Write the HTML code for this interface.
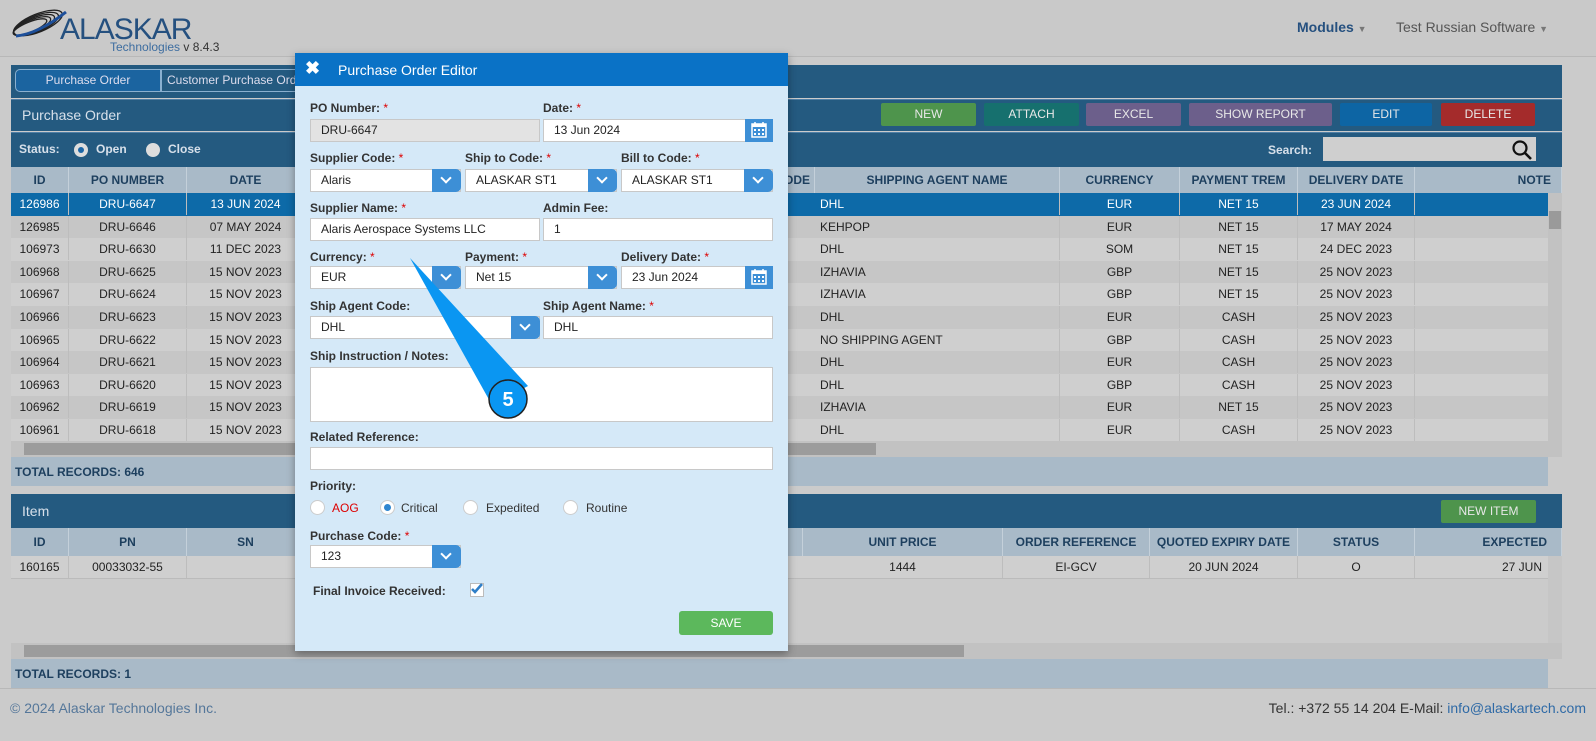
<!DOCTYPE html>
<html><head><meta charset="utf-8"><style>
*{box-sizing:border-box;margin:0;padding:0}
body{width:1596px;height:741px;overflow:hidden;background:#cbcbcb;font-family:"Liberation Sans",sans-serif;position:relative;font-size:12px;color:#222}
.a{position:absolute}
.hdr{left:0;top:0;width:1596px;height:57px;background:#c9c9c9;border-bottom:1px solid #b8b8b8}
.band{background:#245a80}
.th{position:absolute;background:#a9bac8;color:#1d3f5e;font-weight:bold;font-size:12px;text-align:center;line-height:26px;border-right:1px solid #c4d0da}
.td{position:absolute;font-size:12px;text-align:center;line-height:22px;color:#222;border-right:1px solid #bdbdbd}
.btn{position:absolute;top:103px;height:23px;line-height:23px;color:#e8e8e8;text-align:center;font-size:12px;border-radius:2px}
.m{left:295px;top:53px;width:493px;height:598px;background:#d5e9f8;box-shadow:0 3px 8px rgba(0,0,0,.35)}
.lb{position:absolute;font-size:12px;font-weight:bold;color:#333}
.lb i{color:#d00;font-style:normal;font-weight:normal}
.in{position:absolute;height:23px;background:#fff;border:1px solid #c8c8c8;font-size:12px;line-height:21px;padding-left:10px;color:#222}
.dd{position:absolute;top:-1px;right:-1px;width:29px;height:23px;background:#3d8fd6;border-radius:0 5px 5px 0}
.dd:after{content:"";position:absolute;left:10px;top:5px;width:6px;height:6px;border-right:2px solid #fff;border-bottom:2px solid #fff;transform:rotate(45deg)}
.cal{position:absolute;top:-1px;right:-1px;width:28px;height:23px;background:#3d8fd6}
.rad{position:absolute;width:15px;height:15px;border-radius:50%;background:#fff;border:1px solid #ccc}
</style></head><body>
<div class="a hdr"></div>
<svg class="a" style="left:8px;top:6px" width="62" height="36" viewBox="0 0 62 36"><g fill="none" stroke="#222" stroke-width="1.3"><ellipse cx="30" cy="17" rx="26" ry="9" transform="rotate(-22 30 17)"/><ellipse cx="28" cy="18" rx="24" ry="8" transform="rotate(-22 28 18)"/><ellipse cx="26" cy="19" rx="22" ry="7" transform="rotate(-22 26 19)"/><ellipse cx="24" cy="20" rx="20" ry="6" transform="rotate(-22 24 20)"/><ellipse cx="22" cy="21" rx="18" ry="5" transform="rotate(-22 22 21)"/></g><path d="M8 30 Q30 28 58 6" stroke="#1d4f9a" stroke-width="3" fill="none"/></svg>
<div class="a" style="left:60px;top:13px;font-size:30px;color:#25507f;letter-spacing:-1px">ALASKAR</div>
<div class="a" style="left:110px;top:40px;font-size:12px;color:#3d6da0">Technologies <span style="color:#333">v 8.4.3</span></div>
<div class="a" style="left:1297px;top:19px;font-size:14px;font-weight:bold;color:#25507f">Modules <span style="font-size:9px;color:#777">▼</span></div>
<div class="a" style="left:1396px;top:19px;font-size:14px;color:#555">Test Russian Software <span style="font-size:9px;color:#777">▼</span></div>

<div class="a band" style="left:11px;top:65px;width:1551px;height:33px"></div>
<div class="a" style="left:15px;top:69px;width:146px;height:23px;background:#1b64a0;border:1px solid #8ab0d0;border-radius:5px 0 0 5px;color:#dde;text-align:center;line-height:21px">Purchase Order</div>
<div class="a" style="left:161px;top:69px;width:140px;height:23px;border:1px solid #8ab0d0;color:#dde;line-height:21px;padding-left:5px;white-space:nowrap;overflow:hidden">Customer Purchase Order</div>
<div class="a band" style="left:11px;top:99px;width:1551px;height:32px;border-top:1px solid #4f7fa6"></div>
<div class="a" style="left:22px;top:107px;font-size:14px;color:#d7e0ea">Purchase Order</div>
<div class="btn" style="left:881px;width:95px;background:#4e944c">NEW</div>
<div class="btn" style="left:984px;width:95px;background:#16706e">ATTACH</div>
<div class="btn" style="left:1086px;width:95px;background:#6c5f8b">EXCEL</div>
<div class="btn" style="left:1189px;width:143px;background:#6c5f8b">SHOW REPORT</div>
<div class="btn" style="left:1340px;width:92px;background:#0d65a4">EDIT</div>
<div class="btn" style="left:1441px;width:94px;background:#a42b2b">DELETE</div>
<div class="a band" style="left:11px;top:132px;width:1551px;height:35px;border-top:1px solid #4f7fa6"></div>
<div class="a" style="left:19px;top:142px;font-weight:bold;color:#d7e0ea">Status:</div>
<div class="a" style="left:74px;top:143px;width:14px;height:14px;border-radius:50%;background:#ddd"><div style="margin:4px;width:6px;height:6px;border-radius:50%;background:#1c66a6"></div></div>
<div class="a" style="left:96px;top:142px;font-weight:bold;color:#d7e0ea">Open</div>
<div class="a" style="left:146px;top:143px;width:14px;height:14px;border-radius:50%;background:#ddd"></div>
<div class="a" style="left:168px;top:142px;font-weight:bold;color:#d7e0ea">Close</div>
<div class="a" style="left:1268px;top:143px;font-weight:bold;color:#d7e0ea">Search:</div>
<div class="a" style="left:1323px;top:137px;width:213px;height:24px;background:#cfcfcf"></div>
<svg class="a" style="left:1511px;top:139px" width="22" height="22" viewBox="0 0 22 22"><circle cx="9" cy="9" r="6.5" fill="none" stroke="#111" stroke-width="2.2"/><path d="M14 14L20 20" stroke="#111" stroke-width="2.6"/></svg>

<div class="th" style="left:11px;top:167px;width:58px">ID</div>
<div class="th" style="left:69px;top:167px;width:118px">PO NUMBER</div>
<div class="th" style="left:187px;top:167px;width:118px">DATE</div>
<div class="th" style="left:305px;top:167px;width:510px;text-align:right;padding-right:4px">ODE</div>
<div class="th" style="left:815px;top:167px;width:245px">SHIPPING AGENT NAME</div>
<div class="th" style="left:1060px;top:167px;width:120px">CURRENCY</div>
<div class="th" style="left:1180px;top:167px;width:118px">PAYMENT TREM</div>
<div class="th" style="left:1298px;top:167px;width:117px">DELIVERY DATE</div>
<div class="th" style="left:1415px;top:167px;width:147px;text-align:right;padding-right:10px;overflow:hidden">NOTE</div>
<div id="rows"></div>
<div class="a" style="left:1548px;top:193px;width:14px;height:248px;background:#c2c2c2"></div>
<div class="a" style="left:1549px;top:211px;width:12px;height:18px;background:#9a9a9a"></div>
<div class="a" style="left:11px;top:441px;width:1551px;height:16px;background:#c2c2c2"></div>
<div class="a" style="left:24px;top:443px;width:852px;height:12px;background:#9c9c9c"></div>
<div class="a" style="left:11px;top:457px;width:1537px;height:29px;background:#a9bac8"></div>
<div class="a" style="left:15px;top:465px;font-weight:bold;color:#1d3f5e">TOTAL RECORDS: 646</div>

<div class="a band" style="left:11px;top:494px;width:1551px;height:34px"></div>
<div class="a" style="left:22px;top:503px;font-size:14px;color:#d7e0ea">Item</div>
<div class="btn" style="left:1441px;top:500px;width:95px;background:#4e944c">NEW ITEM</div>
<div class="th" style="left:11px;top:528px;width:58px;height:28px;line-height:28px">ID</div>
<div class="th" style="left:69px;top:528px;width:118px;height:28px;line-height:28px">PN</div>
<div class="th" style="left:187px;top:528px;width:118px;height:28px;line-height:28px">SN</div>
<div class="th" style="left:305px;top:528px;width:498px;height:28px"></div>
<div class="th" style="left:803px;top:528px;width:200px;height:28px;line-height:28px">UNIT PRICE</div>
<div class="th" style="left:1003px;top:528px;width:147px;height:28px;line-height:28px">ORDER REFERENCE</div>
<div class="th" style="left:1150px;top:528px;width:148px;height:28px;line-height:28px">QUOTED EXPIRY DATE</div>
<div class="th" style="left:1298px;top:528px;width:117px;height:28px;line-height:28px">STATUS</div>
<div class="th" style="left:1415px;top:528px;width:147px;height:28px;line-height:28px;text-align:right;padding-right:14px">EXPECTED</div>
<div class="a" style="left:11px;top:556px;width:1537px;height:23px;background:#cfcfcf;border-bottom:1px solid #bbb"></div>
<div class="td" style="left:11px;top:556px;width:58px">160165</div>
<div class="td" style="left:69px;top:556px;width:118px">00033032-55</div>
<div class="td" style="left:187px;top:556px;width:118px">&nbsp;</div>
<div class="td" style="left:803px;top:556px;width:200px">1444</div>
<div class="td" style="left:1003px;top:556px;width:147px">EI-GCV</div>
<div class="td" style="left:1150px;top:556px;width:148px">20 JUN 2024</div>
<div class="td" style="left:1298px;top:556px;width:117px">O</div>
<div class="td" style="left:1415px;top:556px;width:133px;text-align:right;padding-right:6px;border:0">27 JUN</div>
<div class="a" style="left:1548px;top:556px;width:14px;height:87px;background:#c6c6c6"></div>
<div class="a" style="left:11px;top:643px;width:1551px;height:16px;background:#c2c2c2"></div>
<div class="a" style="left:24px;top:645px;width:940px;height:12px;background:#9c9c9c"></div>
<div class="a" style="left:11px;top:659px;width:1537px;height:29px;background:#a9bac8"></div>
<div class="a" style="left:15px;top:667px;font-weight:bold;color:#1d3f5e">TOTAL RECORDS: 1</div>
<div class="a" style="left:0;top:688px;width:1596px;height:1px;background:#b8b8b8"></div>
<div class="a" style="left:10px;top:700px;font-size:14px;color:#55779a">© 2024 Alaskar Technologies Inc.</div>
<div class="a" style="right:10px;top:700px;font-size:14px;color:#333">Tel.: +372 55 14 204 E-Mail: <span style="color:#2f6aa6">info@alaskartech.com</span></div>

<div class="a m">
 <div class="a" style="left:0;top:0;width:493px;height:33px;background:#0a72c6"></div>
 <div class="a" style="left:10px;top:5px;color:#fff;font-size:18px;font-weight:bold">✖</div>
 <div class="a" style="left:43px;top:9px;color:#fff;font-size:14px">Purchase Order Editor</div>

 <div class="lb" style="left:15px;top:48px">PO Number: <i>*</i></div>
 <div class="in" style="left:15px;top:66px;width:230px;background:#e3e3e3">DRU-6647</div>
 <div class="lb" style="left:248px;top:48px">Date: <i>*</i></div>
 <div class="in" style="left:248px;top:66px;width:230px">13 Jun 2024<div class="cal"><svg width="28" height="23" viewBox="0 0 28 23"><rect x="7" y="5" width="14" height="13" fill="none" stroke="#fff" stroke-width="1.5"/><rect x="7" y="5" width="14" height="3" fill="#fff"/><path d="M10 3v4M18 3v4" stroke="#fff" stroke-width="1.5"/><g fill="#fff"><rect x="9" y="10" width="2" height="2"/><rect x="13" y="10" width="2" height="2"/><rect x="17" y="10" width="2" height="2"/><rect x="9" y="14" width="2" height="2"/><rect x="13" y="14" width="2" height="2"/><rect x="17" y="14" width="2" height="2"/></g></svg></div></div>

 <div class="lb" style="left:15px;top:98px">Supplier Code: <i>*</i></div>
 <div class="in" style="left:15px;top:116px;width:151px">Alaris<div class="dd"></div></div>
 <div class="lb" style="left:170px;top:98px">Ship to Code: <i>*</i></div>
 <div class="in" style="left:170px;top:116px;width:152px">ALASKAR ST1<div class="dd"></div></div>
 <div class="lb" style="left:326px;top:98px">Bill to Code: <i>*</i></div>
 <div class="in" style="left:326px;top:116px;width:152px">ALASKAR ST1<div class="dd"></div></div>

 <div class="lb" style="left:15px;top:148px">Supplier Name: <i>*</i></div>
 <div class="in" style="left:15px;top:165px;width:230px">Alaris Aerospace Systems LLC</div>
 <div class="lb" style="left:248px;top:148px">Admin Fee:</div>
 <div class="in" style="left:248px;top:165px;width:230px">1</div>

 <div class="lb" style="left:15px;top:197px">Currency: <i>*</i></div>
 <div class="in" style="left:15px;top:213px;width:151px">EUR<div class="dd"></div></div>
 <div class="lb" style="left:170px;top:197px">Payment: <i>*</i></div>
 <div class="in" style="left:170px;top:213px;width:152px">Net 15<div class="dd"></div></div>
 <div class="lb" style="left:326px;top:197px">Delivery Date: <i>*</i></div>
 <div class="in" style="left:326px;top:213px;width:152px">23 Jun 2024<div class="cal"><svg width="28" height="23" viewBox="0 0 28 23"><rect x="7" y="5" width="14" height="13" fill="none" stroke="#fff" stroke-width="1.5"/><rect x="7" y="5" width="14" height="3" fill="#fff"/><path d="M10 3v4M18 3v4" stroke="#fff" stroke-width="1.5"/><g fill="#fff"><rect x="9" y="10" width="2" height="2"/><rect x="13" y="10" width="2" height="2"/><rect x="17" y="10" width="2" height="2"/><rect x="9" y="14" width="2" height="2"/><rect x="13" y="14" width="2" height="2"/><rect x="17" y="14" width="2" height="2"/></g></svg></div></div>

 <div class="lb" style="left:15px;top:246px">Ship Agent Code:</div>
 <div class="in" style="left:15px;top:263px;width:230px">DHL<div class="dd"></div></div>
 <div class="lb" style="left:248px;top:246px">Ship Agent Name: <i>*</i></div>
 <div class="in" style="left:248px;top:263px;width:230px">DHL</div>

 <div class="lb" style="left:15px;top:296px">Ship Instruction / Notes:</div>
 <div class="in" style="left:15px;top:314px;width:463px;height:55px"></div>

 <div class="lb" style="left:15px;top:377px">Related Reference:</div>
 <div class="in" style="left:15px;top:394px;width:463px"></div>

 <div class="lb" style="left:15px;top:426px">Priority:</div>
 <div class="rad" style="left:15px;top:447px"></div><div class="lb" style="left:37px;top:448px;color:#d00;font-weight:normal">AOG</div>
 <div class="rad" style="left:85px;top:447px"><div style="margin:3px;width:7px;height:7px;border-radius:50%;background:#2f86d0"></div></div><div class="lb" style="left:106px;top:448px;font-weight:normal">Critical</div>
 <div class="rad" style="left:168px;top:447px"></div><div class="lb" style="left:191px;top:448px;font-weight:normal">Expedited</div>
 <div class="rad" style="left:268px;top:447px"></div><div class="lb" style="left:291px;top:448px;font-weight:normal">Routine</div>

 <div class="lb" style="left:15px;top:476px">Purchase Code: <i>*</i></div>
 <div class="in" style="left:15px;top:492px;width:151px">123<div class="dd"></div></div>

 <div class="lb" style="left:18px;top:531px">Final Invoice Received:</div>
 <div class="a" style="left:175px;top:530px;width:14px;height:14px;background:#fff;border:1px solid #bbb"></div>
 <svg class="a" style="left:174px;top:528px" width="16" height="16" viewBox="0 0 16 16"><path d="M3 8l3 3 7-8" stroke="#2f7fc8" stroke-width="2.6" fill="none"/></svg>

 <div class="a" style="left:384px;top:558px;width:94px;height:24px;background:#5cb85c;border-radius:3px;color:#fff;text-align:center;line-height:24px">SAVE</div>
</div>
<svg class="a" style="left:0;top:0" width="1596" height="741"><path d="M410 258 L528 386 L492 405 Z" fill="#0a96f2"/><circle cx="508" cy="399" r="19" fill="#0a96f2" stroke="#222" stroke-width="1.5"/><text x="508" y="406" text-anchor="middle" font-family="Liberation Sans" font-weight="bold" font-size="20" fill="#fff">5</text></svg>
<script>
var d=[["126986","DRU-6647","13 JUN 2024","DHL","EUR","NET 15","23 JUN 2024"],["126985","DRU-6646","07 MAY 2024","KEHPOP","EUR","NET 15","17 MAY 2024"],["106973","DRU-6630","11 DEC 2023","DHL","SOM","NET 15","24 DEC 2023"],["106968","DRU-6625","15 NOV 2023","IZHAVIA","GBP","NET 15","25 NOV 2023"],["106967","DRU-6624","15 NOV 2023","IZHAVIA","GBP","NET 15","25 NOV 2023"],["106966","DRU-6623","15 NOV 2023","DHL","EUR","CASH","25 NOV 2023"],["106965","DRU-6622","15 NOV 2023","NO SHIPPING AGENT","GBP","CASH","25 NOV 2023"],["106964","DRU-6621","15 NOV 2023","DHL","EUR","CASH","25 NOV 2023"],["106963","DRU-6620","15 NOV 2023","DHL","GBP","CASH","25 NOV 2023"],["106962","DRU-6619","15 NOV 2023","IZHAVIA","EUR","NET 15","25 NOV 2023"],["106961","DRU-6618","15 NOV 2023","DHL","EUR","CASH","25 NOV 2023"]];
var h="";d.forEach(function(r,i){var y=193+i*22.6,sel=i==0,bg=sel?"#0d6aa8":(i%2?"#c6c6c6":"#cfcfcf"),c=sel?"color:#fff;":"";
h+='<div class="a" style="left:11px;top:'+y+'px;width:1537px;height:23px;background:'+bg+'"></div>';
var cols=[[11,58,0],[69,118,1],[187,118,2],[815,245,3],[1060,120,4],[1180,118,5],[1298,117,6]];
cols.forEach(function(k){h+='<div class="td" style="'+c+'left:'+k[0]+'px;top:'+y+'px;width:'+k[1]+'px;'+(k[2]==3?'text-align:left;padding-left:5px;':'')+'">'+r[k[2]]+'</div>';});});
document.getElementById("rows").innerHTML=h;
</script>
</body></html>
